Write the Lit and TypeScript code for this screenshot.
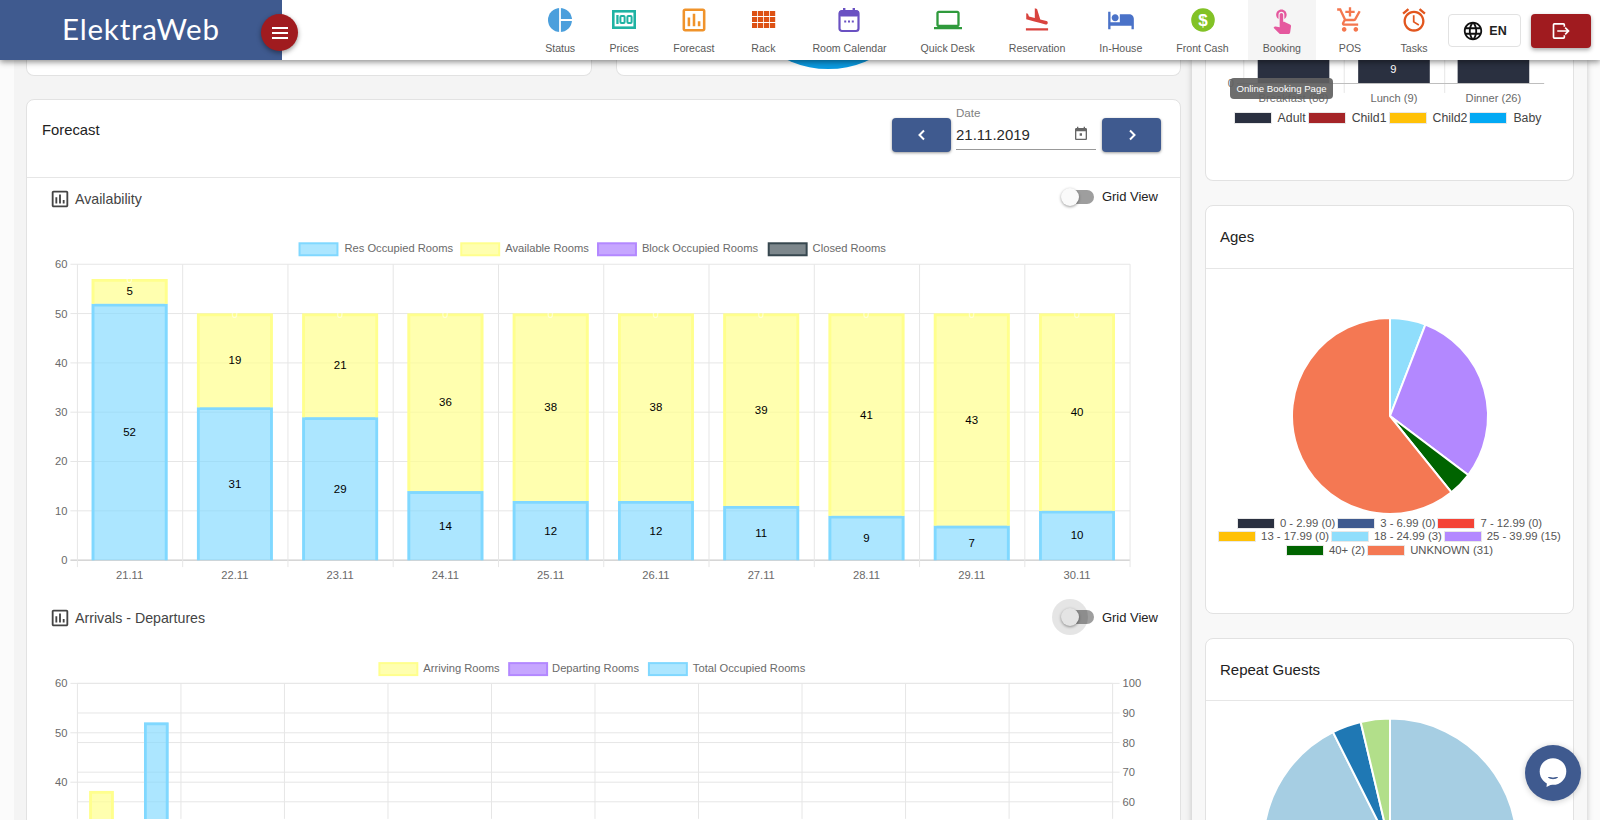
import { LitElement, html, svg, css } from "lit";
import { customElement } from "lit/decorators.js";

const P = {
  chart: "M9 17H7v-7h2v7zm4 0h-2V7h2v10zm4 0h-2v-4h2v4zm2 2H5V5h14v14zm0-16H5c-1.1 0-2 .9-2 2v14c0 1.1.9 2 2 2h14c1.1 0 2-.9 2-2V5c0-1.1-.9-2-2-2z",
  cart: "M11 9h2V6h3V4h-3V1h-2v3H8v2h3v3zm-4 9c-1.1 0-1.99.9-1.99 2S5.9 22 7 22s2-.9 2-2-.9-2-2-2zm10 0c-1.1 0-1.99.9-1.99 2s.89 2 1.99 2 2-.9 2-2-.9-2-2-2zm-9.83-3.25l.03-.12.9-1.63h7.45c.75 0 1.41-.41 1.75-1.03l3.86-7.01L19.42 4h-.01l-1.1 2-2.76 5H8.53l-.13-.27L6.16 6l-.95-2-.94-2H1v2h2l3.6 7.59-1.35 2.45c-.16.28-.25.61-.25.96 0 1.1.9 2 2 2h12v-2H7.42c-.13 0-.25-.11-.25-.25z",
  alarm: "M22 5.72l-4.6-3.86-1.29 1.53 4.6 3.86L22 5.72zM7.88 3.39L6.6 1.86 2 5.71l1.29 1.53 4.59-3.85zM12.5 8H11v6l4.75 2.85.75-1.23-4-2.37V8zM12 4c-4.97 0-9 4.03-9 9s4.03 9 9 9 9-4.03 9-9-4.03-9-9-9zm0 16c-3.87 0-7-3.13-7-7s3.13-7 7-7 7 3.13 7 7-3.13 7-7 7z",
  land: "M2.5 19h19v2h-19zm7.18-5.73l4.35 1.16 5.31 1.42c.8.21 1.62-.26 1.84-1.06.21-.8-.26-1.62-1.06-1.84l-5.31-1.42-2.76-9.02L10.12 2v8.28L5.15 8.95l-.93-2.32-1.45-.39v5.17l1.6.43 5.31 1.43z",
  hotel: "M7 13c1.66 0 3-1.34 3-3S8.66 7 7 7s-3 1.34-3 3 1.34 3 3 3zm12-6h-8v7H3V5H1v15h2v-3h18v3h2v-9c0-2.21-1.79-4-4-4z",
  laptop: "M20 18c1.1 0 1.99-.9 1.99-2L22 6c0-1.1-.9-2-2-2H4c-1.1 0-2 .9-2 2v10c0 1.1.9 2 2 2H0v2h24v-2h-4zM4 6h16v10H4V6z",
  touch: "M9 11.24V7.5C9 6.12 10.12 5 11.5 5S14 6.12 14 7.5v3.74c1.21-.81 2-2.18 2-3.74C16 5.01 13.99 3 11.5 3S7 5.01 7 7.5c0 1.56.79 2.93 2 3.74zm9.84 4.63l-4.54-2.26c-.17-.07-.35-.11-.54-.11H13v-6c0-.83-.67-1.5-1.5-1.5S10 6.67 10 7.5v10.74l-3.43-.72c-.08-.01-.15-.03-.24-.03-.31 0-.59.13-.79.33l-.79.8 4.94 4.94c.27.27.65.44 1.06.44h6.79c.75 0 1.33-.55 1.44-1.28l.75-5.27c.01-.07.02-.14.02-.2 0-.62-.38-1.16-.91-1.38z",
  today: "M19 3h-1V1h-2v2H8V1H6v2H5c-1.11 0-1.99.9-1.99 2L3 19c0 1.1.89 2 2 2h14c1.1 0 2-.9 2-2V5c0-1.1-.9-2-2-2zm0 16H5V8h14v11zM10 11h3.500v3.500H10z",
  globe: "M11.99 2C6.47 2 2 6.48 2 12s4.47 10 9.99 10C17.52 22 22 17.52 22 12S17.52 2 11.99 2zm6.93 6h-2.95c-.32-1.25-.78-2.45-1.38-3.56 1.84.63 3.37 1.91 4.33 3.56zM12 4.04c.83 1.2 1.48 2.53 1.91 3.96h-3.82c.43-1.43 1.08-2.76 1.91-3.96zM4.26 14C4.1 13.36 4 12.69 4 12s.1-1.36.26-2h3.38c-.08.66-.14 1.32-.14 2 0 .68.06 1.34.14 2H4.26zm.82 2h2.95c.32 1.25.78 2.45 1.38 3.56-1.84-.63-3.37-1.9-4.33-3.56zm2.95-8H5.08c.96-1.66 2.49-2.93 4.33-3.56C8.81 5.55 8.35 6.75 8.03 8zM12 19.96c-.83-1.2-1.48-2.53-1.91-3.96h3.82c-.43 1.43-1.08 2.76-1.91 3.96zM14.34 14H9.66c-.09-.66-.16-1.32-.16-2 0-.68.07-1.35.16-2h4.68c.09.65.16 1.32.16 2 0 .68-.07 1.34-.16 2zm.25 5.56c.6-1.11 1.06-2.31 1.38-3.56h2.95c-.96 1.65-2.49 2.93-4.33 3.56zM16.36 14c.08-.66.14-1.32.14-2 0-.68-.06-1.34-.14-2h3.38c.16.64.26 1.31.26 2s-.1 1.36-.26 2h-3.38z",
};

const icon = (d: string, color: string) => svg`<svg class="nicon" viewBox="0 0 24 24"><path d=${d} fill=${color}></path></svg>`;

const rackCells = () => {
  const out: unknown[] = [];
  for (let r = 0; r < 3; r++)
    for (let c = 0; c < 4; c++) out.push(svg`<rect x=${3 + c * 6} y=${5 + r * 6} width="5.200" height="5" fill="#dd5114"></rect>`);
  return out;
};

const NAV = [
  { label: "Status", icon: svg`<svg class="nicon" viewBox="0 0 28 28"><circle cx="14" cy="14" r="12" fill="#4b9fdc"></circle><path d="M14 1v26M14 14h13" stroke="#fff" stroke-width="1.800" fill="none"></path></svg>` },
  { label: "Prices", icon: svg`<svg class="nicon" viewBox="0 0 28 28"><rect x="3.300" y="5.300" width="21.400" height="16.400" fill="none" stroke="#1fb3a3" stroke-width="2.600"></rect><rect x="6.300" y="9" width="2.300" height="9" fill="#1fb3a3"></rect><rect x="10.400" y="10" width="4.200" height="7" rx="1" fill="none" stroke="#1fb3a3" stroke-width="2"></rect><rect x="17.400" y="10" width="4.200" height="7" rx="1" fill="none" stroke="#1fb3a3" stroke-width="2"></rect></svg>` },
  { label: "Forecast", icon: svg`<svg class="nicon" viewBox="1 1 22 22"><path d=${P.chart} fill="#f0932b"></path></svg>` },
  { label: "Rack", icon: svg`<svg class="nicon" viewBox="0 0 28 28">${rackCells()}</svg>` },
  { label: "Room Calendar", icon: svg`<svg class="nicon" viewBox="0 0 28 28"><rect x="4.500" y="5" width="19" height="20" rx="2.500" fill="none" stroke="#6a51c2" stroke-width="2.200"></rect><rect x="4" y="4.500" width="20" height="6" rx="2" fill="#6a51c2"></rect><rect x="8" y="2" width="2.400" height="4" fill="#6a51c2"></rect><rect x="17.600" y="2" width="2.400" height="4" fill="#6a51c2"></rect><rect x="9.200" y="14.500" width="2" height="2" fill="#6a51c2"></rect><rect x="13" y="14.500" width="2" height="2" fill="#6a51c2"></rect><rect x="16.800" y="14.500" width="2" height="2" fill="#6a51c2"></rect></svg>` },
  { label: "Quick Desk", icon: icon(P.laptop, "#2f9a3c") },
  { label: "Reservation", icon: icon(P.land, "#d9433e") },
  { label: "In-House", icon: icon(P.hotel, "#4a72c8") },
  { label: "Front Cash", icon: svg`<svg class="nicon" viewBox="0 0 28 28"><circle cx="14" cy="14" r="11.800" fill="#82c226"></circle><text x="14" y="20" text-anchor="middle" class="dollar">$</text></svg>` },
  { label: "Booking", active: true, icon: icon(P.touch, "#e5589e") },
  { label: "POS", icon: icon(P.cart, "#f4774f") },
  { label: "Tasks", icon: icon(P.alarm, "#e2561e") },
];

const FC = { res: [52, 31, 29, 14, 12, 12, 11, 9, 7, 10], av: [5, 19, 21, 36, 38, 38, 39, 41, 43, 40] };
const DATES = ["21.11", "22.11", "23.11", "24.11", "25.11", "26.11", "27.11", "28.11", "29.11", "30.11"];
const BLUE = { fill: "rgba(128,216,255,.65)", stroke: "#80d8ff" };
const YELLOW = { fill: "rgba(255,255,141,.7)", stroke: "#ffff8d" };
const PURPLE = { fill: "rgba(179,136,255,.75)", stroke: "#b388ff" };
const SLATE = { fill: "rgba(55,71,79,.65)", stroke: "#37474f" };

const bar = (x: number, w: number, top: number, bottom: number, c: { fill: string; stroke: string }) => svg`
  <rect x=${x} y=${top} width=${w} height=${bottom - top} fill=${c.fill}></rect>
  <path d="M${x + 1.4} ${bottom}V${top + 1.4}H${x + w - 1.4}V${bottom}" fill="none" stroke=${c.stroke} stroke-width="2.800"></path>`;

const legendSvg = (items: [number, number, string, { fill: string; stroke: string }][], y: number) =>
  items.map(([sx, tx, label, c]) => svg`
    <rect x=${sx + 1} y=${y - 6} width="38" height="12" fill=${c.fill} stroke=${c.stroke} stroke-width="2"></rect>
    <text x=${tx} y=${y + 3} class="tick">${label}</text>`);

const forecastChart = () => {
  const L = 76.5, W = 105.45, T = 264, U = 4.94, B = T + 60 * U;
  const yp = (v: number) => B - v * U;
  return html`<svg class="chart1" viewBox="26 220 1155 377">
    ${legendSvg([[298, 344, "Res Occupied Rooms", BLUE], [460, 505, "Available Rooms", YELLOW], [597, 642, "Block Occupied Rooms", PURPLE], [768, 813, "Closed Rooms", SLATE]], 249)}
    ${[0, 10, 20, 30, 40, 50, 60].map((v) => svg`
      <line x1=${L - 7} x2=${L + 10 * W} y1=${yp(v)} y2=${yp(v)} stroke=${v === 0 ? "#bdbdbd" : "#e6e6e6"}></line>
      <text x=${L - 10} y=${yp(v) + 4} text-anchor="end" class="tick">${v}</text>`)}
    ${Array.from({ length: 11 }, (_, i) => svg`<line x1=${L + i * W} x2=${L + i * W} y1=${T} y2=${B + 7} stroke="#e6e6e6"></line>`)}
    ${FC.res.map((r, i) => {
      const a = FC.av[i], x = L + i * W + 14.3, w = 76, cx = x + w / 2;
      return svg`
        ${bar(x, w, yp(r), B, BLUE)}
        ${bar(x, w, yp(r + a), yp(r), YELLOW)}
        <text x=${cx} y=${yp(r / 2) + 4} text-anchor="middle" class="val">${r}</text>
        <text x=${cx} y=${yp(r + a / 2) + 4} text-anchor="middle" class="val">${a}</text>
        <text x=${cx} y=${yp(r + a) + 4} text-anchor="middle" class="ghost">0</text>
        <text x=${cx} y=${B + 19} text-anchor="middle" class="tick">${DATES[i]}</text>`;
    })}
  </svg>`;
};

const arrivalsChart = () => {
  const L = 76.5, W = 103.7, T = 684.3, R = L + 10 * W;
  return html`<svg class="chart2" viewBox="26 640 1155 180">
    ${legendSvg([[378, 423, "Arriving Rooms", YELLOW], [508, 552, "Departing Rooms", PURPLE], [648, 693, "Total Occupied Rooms", BLUE]], 670)}
    ${[60, 50, 40].map((v, i) => svg`
      <line x1=${L - 7} x2=${R} y1=${T + i * 49.5} y2=${T + i * 49.5} stroke="#e6e6e6"></line>
      <text x=${L - 10} y=${T + i * 49.5 + 4} text-anchor="end" class="tick">${v}</text>`)}
    ${[100, 90, 80, 70, 60].map((v, i) => svg`
      <line x1=${L} x2=${R + 7} y1=${T + i * 29.65} y2=${T + i * 29.65} stroke="#e6e6e6"></line>
      <text x=${R + 10} y=${T + i * 29.65 + 4} class="tick">${v}</text>`)}
    ${Array.from({ length: 11 }, (_, i) => svg`<line x1=${L + i * W} x2=${L + i * W} y1=${T} y2="820" stroke="#e6e6e6"></line>`)}
    ${bar(88.3, 24.6, 792, 830, YELLOW)}
    ${bar(143.2, 24.6, 723.5, 830, BLUE)}
  </svg>`;
};

const meals = () => html`<svg class="meals" viewBox="1205 60 369 50">
  ${[1243, 1344, 1445].map((x) => svg`<line x1=${x} x2=${x} y1="60" y2="93" stroke="#e6e6e6"></line>`)}
  ${[1257, 1358, 1458].map((x) => svg`<rect x=${x} y="58" width="72" height="25.300" fill="#2a3040"></rect>`)}
  <line x1="1236" x2="1545" y1="83.500" y2="83.500" stroke="#bdbdbd"></line>
  <text x="1233" y="87.500" text-anchor="end" class="tick">0</text>
  <text x="1393.500" y="72.500" text-anchor="middle" class="white">9</text>
  <text x="1293" y="102" text-anchor="middle" class="tick">Breakfast (88)</text>
  <text x="1394" y="102" text-anchor="middle" class="tick">Lunch (9)</text>
  <text x="1494" y="102" text-anchor="middle" class="tick">Dinner (26)</text>
</svg>`;

const pt = (cx: number, cy: number, r: number, deg: number) => {
  const a = ((deg - 90) * Math.PI) / 180;
  return [cx + r * Math.cos(a), cy + r * Math.sin(a)];
};
const pie = (cx: number, cy: number, r: number, data: [number, string][]) => {
  const total = data.reduce((s, d) => s + d[0], 0);
  let a = 0;
  return data.map(([v, color]) => {
    const a0 = a, a1 = a + (v / total) * 360;
    a = a1;
    const [x0, y0] = pt(cx, cy, r, a0), [x1, y1] = pt(cx, cy, r, a1);
    return svg`<path d="M${cx} ${cy}L${x0} ${y0}A${r} ${r} 0 ${a1 - a0 > 180 ? 1 : 0} 1 ${x1} ${y1}Z" fill=${color} stroke="#fff" stroke-width="2"></path>`;
  });
};

const MEAL_LEGEND: [string, string][] = [["#2a3040", "Adult"], ["#a52528", "Child1"], ["#ffc107", "Child2"], ["#03a9f4", "Baby"]];
const AGE_LEGEND: [string, string][] = [
  ["#2a3040", "0 - 2.99 (0)"], ["#3f5a8f", "3 - 6.99 (0)"], ["#f44336", "7 - 12.99 (0)"],
  ["#ffc107", "13 - 17.99 (0)"], ["#90defc", "18 - 24.99 (3)"], ["#b388ff", "25 - 39.99 (15)"],
  ["#006400", "40+ (2)"], ["#f47853", "UNKNOWN (31)"],
];

@customElement("app-root")
export class AppRoot extends LitElement {
  static styles = css`
    :host { display: block; height: 820px; overflow: hidden; position: relative; background: #fbfbfb; font-family: "Liberation Sans", Arial, sans-serif; color: #222; }
    * { box-sizing: border-box; }
    svg { display: block; }
    .header { position: relative; z-index: 5; height: 60px; display: flex; background: #fff; box-shadow: 0 2px 6px rgba(0,0,0,.45); padding-right: 9px; }
    .logo { width: 282px; background: #3f5a8f; color: #fff; font-family: Lato, sans-serif; font-size: 29.5px; letter-spacing: .8px; padding: 12px 0 0 62px; line-height: 34px; font-weight: 400; }
    .burger { position: absolute; left: 261px; top: 14px; width: 37px; height: 37px; border-radius: 50%; background: #a01b1f; box-shadow: 0 2px 5px rgba(0,0,0,.4); display: flex; flex-direction: column; gap: 3px; align-items: center; justify-content: center; }
    .burger span { width: 16px; height: 2px; background: #fff; }
    .nav { margin-left: auto; display: flex; align-items: flex-start; }
    .item { margin: 0 2px; padding: 6px 15px 0; min-width: 60px; height: 60px; display: flex; flex-direction: column; align-items: center; white-space: nowrap; font-size: 10.6px; line-height: 13px; color: #5a5a5a; }
    .item.active { background: #f5f5f5; }
    .nicon { width: 28px; height: 28px; margin-bottom: 8px; }
    .dollar { font: 700 17px "Liberation Sans", sans-serif; fill: #fff; }
    .lang { align-self: flex-start; margin: 14px 0 0 2px; width: 73px; height: 33px; background: #fff; border: 1px solid #e2e2e2; border-radius: 4px; display: flex; align-items: center; justify-content: center; gap: 5px; font-size: 12.5px; font-weight: 700; color: #222; }
    .lang svg { width: 22px; height: 22px; }
    .logout { align-self: flex-start; margin: 14px 0 0 10px; width: 60px; height: 34px; background: #a01b1f; border-radius: 4px; box-shadow: 0 2px 4px rgba(0,0,0,.35); display: flex; align-items: center; justify-content: center; }
    .logout svg { width: 20px; height: 20px; }

    .body { display: grid; grid-template-columns: 14px 1178px 395px 13px; height: 760px; overflow: hidden; }
    .main { grid-column: 2; background: #f4f4f4; padding: 0 11px 0 12px; display: flex; flex-direction: column; gap: 23px; }
    .side { grid-column: 3; background: #f8f8f8; box-shadow: 0 0 6px rgba(0,0,0,.22); padding: 0 13px; display: flex; flex-direction: column; gap: 24px; }
    .card { background: #fff; border: 1px solid #e2e2e2; border-radius: 8px; flex: none; }
    .clipped { border-top: none; border-radius: 0 0 8px 8px; }
    .top-row { display: grid; grid-template-columns: 566px 565px; gap: 24px; flex: none; }
    .stub { height: 16px; }
    .stub svg { width: 100%; height: 15px; }

    .fhead { height: 78px; display: flex; padding: 0 19px 0 15px; border-bottom: 1px solid #e6e6e6; align-items: flex-start; }
    .ftitle { font-size: 14.8px; line-height: 18px; margin: 21px auto 0 0; color: #222; }
    .nbtn { width: 59px; height: 34px; margin-top: 18px; background: #3f5a8f; border-radius: 4px; box-shadow: 0 1px 3px rgba(0,0,0,.4); display: flex; align-items: center; justify-content: center; }
    .nbtn svg { width: 14px; height: 14px; }
    .date { width: 140px; margin: 6px 6px 0 5px; }
    .date label { display: block; font-size: 11.6px; line-height: 14px; color: #808080; }
    .dval { height: 29.5px; display: flex; align-items: center; justify-content: space-between; padding-right: 7px; border-bottom: 1.5px solid #999; font-size: 15px; color: #2a2a2a; }
    .dval svg { width: 16px; height: 16px; }
    .shead { height: 42px; display: flex; align-items: center; padding: 0 22px 0 24px; font-size: 14.2px; color: #444; }
    .shead .sic { width: 22px; height: 22px; margin: 0 4px 0 -2px; }
    .switch { margin-left: auto; display: flex; align-items: center; gap: 8px; font-size: 13px; color: #222; padding-bottom: 5px; }
    .switch.low { padding-bottom: 2px; }
    .track { position: relative; width: 28px; height: 14px; border-radius: 7px; background: #9e9e9e; }
    .thumb { position: absolute; left: -5px; top: -2px; width: 18px; height: 18px; border-radius: 50%; background: #fafafa; box-shadow: 0 1px 3px rgba(0,0,0,.4); }
    .halo::before { content: ""; position: absolute; left: -14px; top: -11px; width: 36px; height: 36px; border-radius: 50%; background: rgba(0,0,0,.1); }
    .halo .thumb { background: #e4e4e4; }
    .chart1 { width: 100%; height: 377px; }
    .chart2 { width: 100%; height: 180px; margin-bottom: 60px; }
    .tick { font: 11.2px "Liberation Sans", sans-serif; fill: #6a6a6a; }
    .val { font: 11.5px "Liberation Sans", sans-serif; fill: #000; }
    .ghost { font: 11.2px "Liberation Sans", sans-serif; fill: rgba(255,255,255,.65); }
    .white { font: 11.2px "Liberation Sans", sans-serif; fill: #fff; }

    .meal-card { height: 121px; }
    .meals { width: 100%; height: 50px; }
    .lg-row { display: flex; justify-content: center; gap: 2px; margin-top: 1px; padding-right: 4px; font-size: 12.3px; line-height: 14px; color: #444; }
    .lg-item { display: flex; align-items: center; gap: 6px; white-space: nowrap; }
    .sw { width: 38px; height: 12px; border: 1px solid #e8e8e8; }
    .chead { height: 62px; display: flex; align-items: center; padding: 0 14px 1px; font-size: 15px; color: #222; border-bottom: 1px solid #e6e6e6; }
    .ages { height: 409px; }
    .ages .chead { height: 63px; padding-bottom: 2px; }
    .ages svg { width: 100%; height: 247px; }
    .age-lg { display: flex; flex-wrap: wrap; justify-content: center; gap: 2px; padding: 2px 4px 0; font-size: 11.3px; line-height: 11.3px; color: #555; }
    .age-lg .lg-item { gap: 5px; }
    .age-lg .sw { height: 11px; width: 38px; }
    .repeat { height: 300px; }
    .repeat svg { width: 100%; height: 120px; }

    .tip { position: absolute; z-index: 6; left: 1230px; top: 78px; width: 103px; height: 21px; background: rgba(97,97,97,.92); color: #fff; border-radius: 4px; font-size: 9.6px; line-height: 21px; text-align: center; white-space: nowrap; }
    .chat { position: absolute; z-index: 6; left: 1525px; top: 745px; width: 56px; height: 56px; border-radius: 50%; background: #3f5a8f; box-shadow: 0 1px 6px rgba(0,0,0,.2); }
    .chat svg { width: 56px; height: 56px; }
  `;

  private section(title: string, halo = false) {
    return html`<div class="shead">
      <svg class="sic" viewBox="0 0 24 24"><path d=${P.chart} fill="#444"></path></svg>${title}
      <div class="switch ${halo ? "low" : ""}"><div class="track ${halo ? "halo" : ""}"><div class="thumb"></div></div>Grid View</div>
    </div>`;
  }

  render() {
    return html`
      <div class="header">
        <div class="logo">ElektraWeb</div>
        <div class="burger"><span></span><span></span><span></span></div>
        <div class="nav">
          ${NAV.map((n) => html`<div class="item ${n.active ? "active" : ""}">${n.icon}<span>${n.label}</span></div>`)}
        </div>
        <div class="lang"><svg viewBox="0 0 24 24"><path d=${P.globe} fill="#111"></path></svg>EN</div>
        <div class="logout"><svg viewBox="0 0 24 24"><path d="M16 7V4.500a1 1 0 0 0-1-1H4a1 1 0 0 0-1 1v15a1 1 0 0 0 1 1h11a1 1 0 0 0 1-1V17" fill="none" stroke="#fff" stroke-width="2"></path><path d="M7.500 12H21M17 8l4 4-4 4" fill="none" stroke="#fff" stroke-width="2"></path></svg></div>
      </div>
      <div class="body">
        <div class="main">
          <div class="top-row">
            <div class="card clipped stub"></div>
            <div class="card clipped stub"><svg viewBox="616 60 565 15"><circle cx="828" cy="-28" r="97" fill="#0a9ae0"></circle></svg></div>
          </div>
          <div class="card">
            <div class="fhead">
              <div class="ftitle">Forecast</div>
              <div class="nbtn"><svg viewBox="0 0 14 14"><path d="M9 2.500L4.500 7 9 11.500" fill="none" stroke="#fff" stroke-width="2"></path></svg></div>
              <div class="date">
                <label>Date</label>
                <div class="dval">21.11.2019<svg viewBox="0 0 24 24"><path d=${P.today} fill="#666"></path></svg></div>
              </div>
              <div class="nbtn"><svg viewBox="0 0 14 14"><path d="M5 2.500L9.500 7 5 11.500" fill="none" stroke="#fff" stroke-width="2"></path></svg></div>
            </div>
            ${this.section("Availability")}
            ${forecastChart()}
            ${this.section("Arrivals - Departures", true)}
            ${arrivalsChart()}
          </div>
        </div>
        <div class="side">
          <div class="card clipped meal-card">
            ${meals()}
            <div class="lg-row">${MEAL_LEGEND.map(([c, t]) => html`<div class="lg-item"><div class="sw" style="background:${c}"></div>${t}</div>`)}</div>
          </div>
          <div class="card ages">
            <div class="chead">Ages</div>
            <svg viewBox="1206 269 367 247">${pie(1390, 416, 98, [[3, "#90defc"], [15, "#b388ff"], [2, "#006400"], [31, "#f47853"]])}</svg>
            <div class="age-lg">${AGE_LEGEND.map(([c, t]) => html`<div class="lg-item"><div class="sw" style="background:${c}"></div>${t}</div>`)}</div>
          </div>
          <div class="card repeat">
            <div class="chead">Repeat Guests</div>
            <svg viewBox="1206 701 367 120">${pie(1390, 845.6, 127, [[25, "#a6cee3"], [1, "#1f78b4"], [1, "#b2df8a"]])}</svg>
          </div>
        </div>
      </div>
      <div class="tip">Online Booking Page</div>
      <div class="chat"><svg viewBox="0 0 56 56"><circle cx="28" cy="26.500" r="13.300" fill="#fff"></circle><path d="M22 37l-.5 5 6-3z" fill="#fff"></path><path d="M23.500 32.500q4.500 2.500 9 0q-4.500 1.200-9 0z" fill="#3f5a8f" stroke="#3f5a8f"></path></svg></div>
    `;
  }
}
